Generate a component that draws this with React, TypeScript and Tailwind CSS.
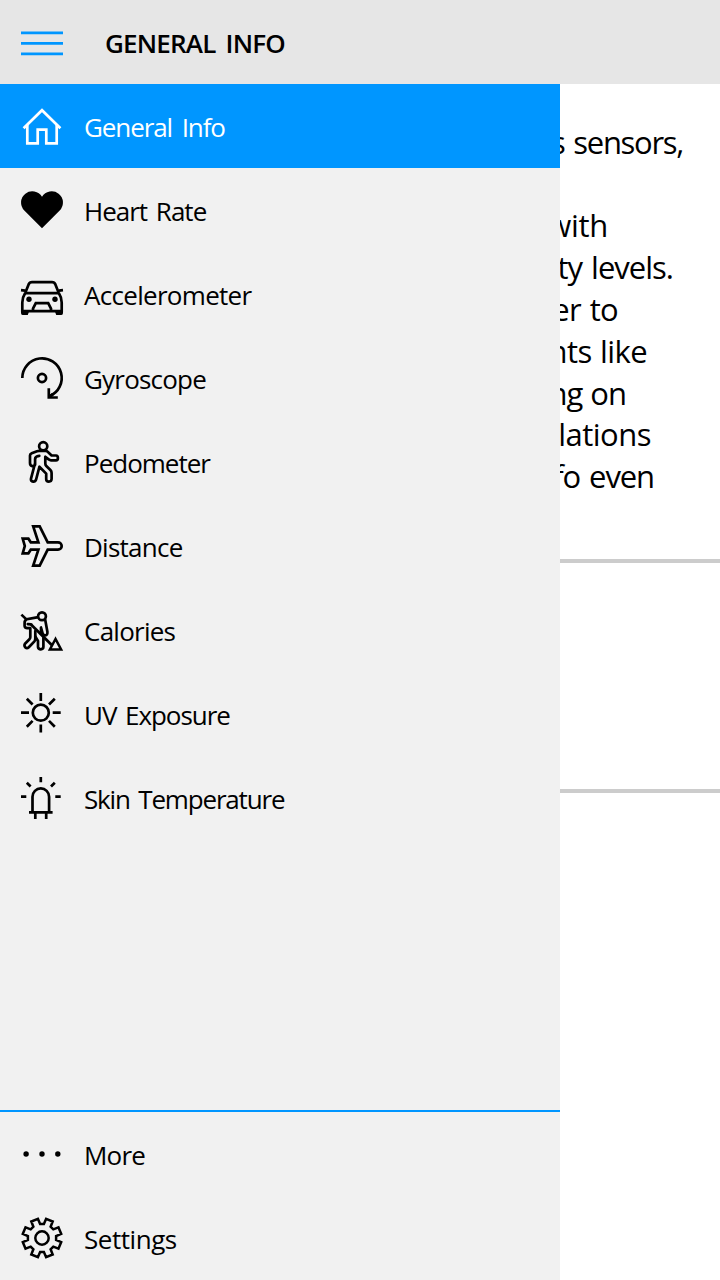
import type { ReactNode } from 'react';

function Icon({ children }: { children: ReactNode }) {
  return (
    <svg
      viewBox="0 0 42 42"
      className="h-[42px] w-[42px] shrink-0 overflow-visible"
      fill="none"
      stroke="currentColor"
      strokeWidth={2.7}
      strokeLinejoin="miter"
    >
      {children}
    </svg>
  );
}

const gearPoints = Array.from({ length: 8 }, (_, i) => i * 45)
  .flatMap((deg) => {
    const a = (deg * Math.PI) / 180;
    return [
      [-4.1, -19.2],
      [-1.9, -14.1],
      [1.9, -14.1],
      [4.1, -19.2],
    ].map(([x, y]) => {
      const px = 21 + x * Math.cos(a) - y * Math.sin(a);
      const py = 21 + x * Math.sin(a) + y * Math.cos(a);
      return `${px.toFixed(2)},${py.toFixed(2)}`;
    });
  })
  .join(' ');

const icons = {
  menu: (
    <Icon>
      <path d="M0 11.9H42M0 22.4H42M0 32.9H42" />
    </Icon>
  ),
  home: (
    <Icon>
      <path d="M2.6 23.3 21 5.2 39.4 23.3" />
      <path d="M6.3 20V38.4H16.7V24.6H25.3V38.4H35.7V20" />
    </Icon>
  ),
  heart: (
    <Icon>
      <path
        d="M21 39.2 3.3 21.5A11.3 11.3 0 1 1 21 7.7 11.3 11.3 0 1 1 38.7 21.5Z"
        fill="currentColor"
        stroke="none"
      />
    </Icon>
  ),
  car: (
    <Icon>
      <path d="M4.2 20 7.6 11.4Q8.6 9.1 11 9.1H31Q33.4 9.1 34.4 11.4L37.8 20" />
      <path d="M0 17.2 4 17.6M42 17.2 38 17.6M4 20.1H38" />
      <path d="M4.2 20Q1.3 24.5 1.3 29.5V38.2H40.7V29.5Q40.7 24.5 37.8 20" />
      <path d="M12 38V35.6L14.8 30.1H27.2L30 35.6V38" />
      <path d="M0 38H8.2L6.8 41.9H1.6Q0 41.9 0 40ZM42 38H33.8L35.2 41.9H40.4Q42 41.9 42 40Z" fill="currentColor" stroke="none" />
      <circle cx="8" cy="26.3" r="2.7" fill="currentColor" stroke="none" />
      <circle cx="34" cy="26.3" r="2.7" fill="currentColor" stroke="none" />
    </Icon>
  ),
  gyro: (
    <Icon>
      <path d="M1.3 21A19.7 19.7 0 1 1 28.6 39.2" />
      <path d="M27.8 31.2V40.5H36.8M27.8 40.5 32 36.8" />
      <circle cx="21" cy="21" r="4.1" />
    </Icon>
  ),
  walk: (
    <Icon>
      <circle cx="22.2" cy="5.3" r="4.1" />
      <path
        strokeLinejoin="round"
        strokeLinecap="round"
        d="M18.3 14.8Q14.1 15.2 14.1 18V23.5Q13.6 25.2 11.4 25.2 9 24.6 9 22V14.5Q8.9 13 10.7 12.3L16 10.3Q17 9.9 18.1 9.9H24.6Q26 9.9 27.2 11.2L30.6 14.5H35Q36.9 14.6 36.9 16.9 36.9 19.3 35 19.3H30Q28.8 19.3 28 18.6L24.3 15.8V22.5Q24.3 24 25.3 25L29.4 29Q30.6 30.2 30.6 32V38Q30.4 40.6 27.9 40.6 25.2 40.6 25.2 38.3V32.6L18.4 25.8 15.1 38.5Q14.3 40.8 12.2 40.6 9.4 40.1 10 37.6L14.1 22"
      />
    </Icon>
  ),
  plane: (
    <Icon>
      <path d="M26.7 17.3H37A3.7 3.7 0 0 1 37 24.7H26.7L18.7 40.6H12.2L17.4 24.7H9.8L7.4 28.3H1.7L3.8 21 1.7 13.7H7.4L9.8 17.3H17.4L12.2 1.4H18.7Z" />
    </Icon>
  ),
  worker: (
    <Icon>
      <circle cx="21" cy="7.3" r="3.9" />
      <path d="M.4 5.6 5.4 10.4 17.3 8.2" />
      <g strokeLinejoin="round" strokeLinecap="round">
        <path d="M5 10.5Q3.6 12 3.6 14V17Q4 19.3 6.5 19.2H9.3V28.3Q9.3 29.4 8.4 30.3L4 34.8Q2.8 36.7 4.3 38.4 6 39.8 7.8 38.2L13.2 32.6Q14.3 31.4 14.3 29.6V22" />
        <path d="M14.3 27.5 17 32V38Q17.3 40.3 19.8 40.3 22.4 40.2 22.4 37.8V29" />
        <path d="M24.1 10.3 26.4 22.7Q26.7 26.2 24.3 26.4 22.1 26.4 21.6 24.3L20 18.5V25" />
        <path d="M6.8 15.2 10.2 15.4" />
      </g>
      <path d="M10 15.4 31 36.2" strokeWidth={2.8} />
      <path d="M34.5 30 28.9 40.4H40.1Z" strokeWidth={2.5} />
    </Icon>
  ),
  sun: (
    <Icon>
      <circle cx="19.8" cy="19.7" r="8" />
      <path d="M19.8 0V8M19.8 31.6V39.6M0 19.7H8M31.7 19.7H39.7M5.8 5.7 11.6 11.5M33.8 5.7 28 11.5M5.8 33.7 11.6 27.9M33.8 33.7 28 27.9" />
    </Icon>
  ),
  led: (
    <Icon>
      <path d="M11.5 35.4V19.7A8.3 8.3 0 0 1 28.1 19.7V35.4M8 35.4H31.6M14.3 35V42M25.2 35V42" />
      <path d="M19.8 0V5.2M0 19.7H5.3M34.3 19.7H39.7M5.8 5.7 9.6 9.5M33.8 5.7 30 9.5" />
    </Icon>
  ),
  more: (
    <Icon>
      <g fill="currentColor" stroke="none">
        <circle cx="5.1" cy="21" r="2.7" />
        <circle cx="21" cy="21" r="2.7" />
        <circle cx="36.8" cy="21" r="2.7" />
      </g>
    </Icon>
  ),
  gear: (
    <Icon>
      <polygon points={gearPoints} strokeWidth={2.5} />
      <circle cx="21" cy="21" r="6.7" strokeWidth={2.5} />
    </Icon>
  ),
};

type Item = { label: string; icon: ReactNode; tracking: string; active?: boolean };

const mainItems: Item[] = [
  { label: 'General Info', icon: icons.home, tracking: 'tracking-[-1.1px] [word-spacing:4px]', active: true },
  { label: 'Heart Rate', icon: icons.heart, tracking: 'tracking-[-1px] [word-spacing:3px]' },
  { label: 'Accelerometer', icon: icons.car, tracking: 'tracking-[-0.7px]' },
  { label: 'Gyroscope', icon: icons.gyro, tracking: 'tracking-[-0.8px]' },
  { label: 'Pedometer', icon: icons.walk, tracking: 'tracking-[-1px]' },
  { label: 'Distance', icon: icons.plane, tracking: 'tracking-[-0.75px]' },
  { label: 'Calories', icon: icons.worker, tracking: 'tracking-[-0.75px]' },
  { label: 'UV Exposure', icon: icons.sun, tracking: 'tracking-[-1.05px] [word-spacing:3px]' },
  { label: 'Skin Temperature', icon: icons.led, tracking: 'tracking-[-1.18px] [word-spacing:3px]' },
];

const footerItems: Item[] = [
  { label: 'More', icon: icons.more, tracking: 'tracking-[-0.8px]' },
  { label: 'Settings', icon: icons.gear, tracking: 'tracking-[-0.45px]' },
];

function MenuItem({ label, icon, tracking, active }: Item) {
  return (
    <li className={active ? 'bg-[#0096ff] text-white' : 'text-black'}>
      <button className="flex h-[84px] w-full items-center gap-[21px] pl-[21px] text-left">
        {icon}
        <span className={`pt-0.5 text-[26px] leading-9 whitespace-nowrap ${tracking}`}>{label}</span>
      </button>
    </li>
  );
}

const lines = [
  { text: 's sensors,', style: 'pr-[37px] tracking-[-1.3px] [word-spacing:2px]' },
  { text: '', style: 'pr-[36px]' },
  { text: 'with', style: 'pr-[112px] tracking-[-0.3px]' },
  { text: 'ty levels.', style: 'pr-[47px] tracking-[-1px] [word-spacing:2px]' },
  { text: 'er to', style: 'pr-[102px] tracking-[-0.7px] [word-spacing:1.5px]' },
  { text: 'nts like', style: 'pr-[73px] tracking-[-0.6px] [word-spacing:1px]' },
  { text: 'ng on', style: 'pr-[94px] tracking-[-1px] [word-spacing:1px]' },
  { text: 'lations', style: 'pr-[69px] tracking-[-0.5px]' },
  { text: 'fo even', style: 'pr-[66px] tracking-[-1.1px] [word-spacing:2px]' },
];

export default function App() {
  return (
    <div className="flex h-[1280px] w-[720px] flex-col overflow-hidden bg-white font-['Open_Sans','Noto_Sans',sans-serif] text-black">
      <header className="flex h-[84px] shrink-0 items-center gap-[42px] bg-[#e6e6e6] pl-[21px]">
        <button className="text-[#0096ff]" aria-label="Menu">
          {icons.menu}
        </button>
        <h1 className="pt-0.5 text-[26px] leading-9 font-semibold tracking-[-0.8px] whitespace-nowrap [word-spacing:4px]">GENERAL INFO</h1>
      </header>
      <div className="flex min-h-0 flex-1">
        <nav className="flex w-[560px] shrink-0 flex-col justify-between bg-[#f1f1f1]">
          <ul>
            {mainItems.map((item) => (
              <MenuItem key={item.label} {...item} />
            ))}
          </ul>
          <ul className="border-t-2 border-[#0096ff]">
            {footerItems.map((item) => (
              <MenuItem key={item.label} {...item} />
            ))}
          </ul>
        </nav>
        <main className="flex flex-1 flex-col overflow-hidden">
          <div className="h-[479px] shrink-0 border-b-4 border-[#cccccc] pt-[37.5px]">
            {lines.map((line, i) => (
              <p key={i} className={`flex h-[41.85px] justify-end text-[31px] leading-[41.85px] whitespace-nowrap ${line.style}`}>
                {line.text}
              </p>
            ))}
          </div>
          <div className="h-[230px] shrink-0 border-b-4 border-[#cccccc]" />
        </main>
      </div>
    </div>
  );
}
